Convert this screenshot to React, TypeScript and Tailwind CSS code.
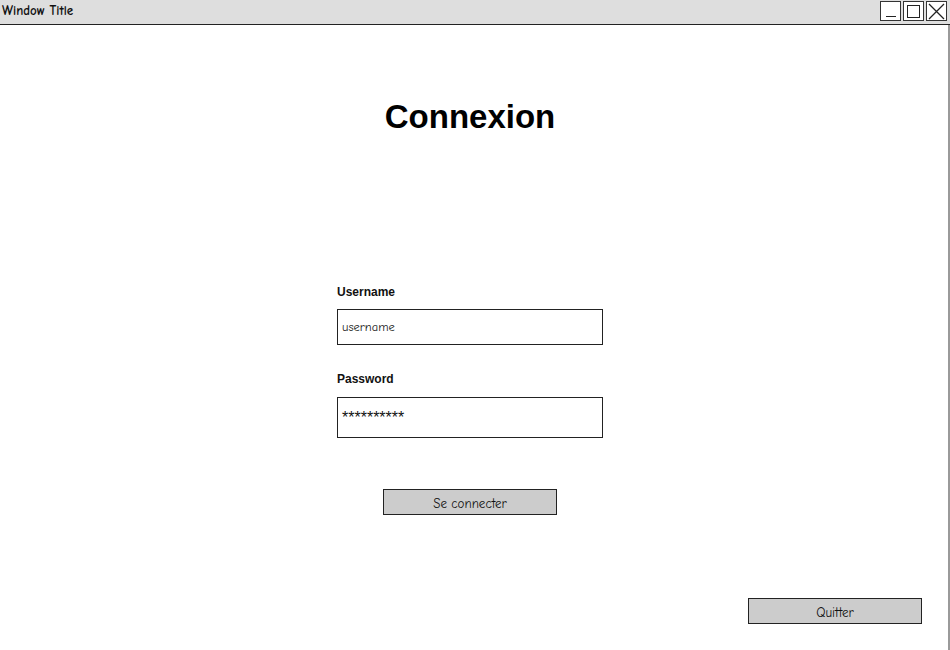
import React from "react";

const comic = { fontFamily: '"Comic Sans MS", "Comic Neue", "DejaVu Sans", sans-serif' };

export default function App() {
  return (
    <div className="w-[950px] h-[650px] bg-white flex flex-col overflow-hidden">
      <div className="h-[25px] bg-[#dedede] border-b-[1.5px] border-[#222] flex items-start justify-between shrink-0">
        <div
          className="pl-[2px] pt-[4px] text-[13px] leading-[14px] font-bold text-[#111]"
          style={comic}
        >
          Window Title
        </div>
        <div className="flex gap-[2px] pt-[1px] pr-[3px]">
          <div className="w-[21px] h-[20px] bg-white border border-[#333] flex items-end justify-center pb-[3px]">
            <div className="w-[10px] h-[1.5px] bg-[#222]" />
          </div>
          <div className="w-[21px] h-[20px] bg-white border border-[#333] flex items-center justify-center">
            <div className="w-[13px] h-[13px] border-[1.5px] border-[#222]" />
          </div>
          <div className="w-[21px] h-[20px] bg-white border border-[#333] flex items-center justify-center">
            <svg width="17" height="17" viewBox="0 0 17 17">
              <path d="M1 1 L16 16 M16 1 L1 16" stroke="#222" strokeWidth="1.3" fill="none" />
            </svg>
          </div>
        </div>
      </div>
      <div className="flex-1 flex">
        <div className="flex-1 flex flex-col" style={{ fontFamily: '"Liberation Sans", Arial, sans-serif' }}>
          <div className="pr-[8px] mt-[73px] text-center text-[33px] leading-[38px] font-bold text-black">
            Connexion
          </div>
          <div className="pr-[8px] flex justify-center mt-[148px]">
            <div className="w-[266px] flex flex-col">
              <div className="text-[12px] leading-[16px] font-bold text-[#111]">Username</div>
              <div className="mt-[9px] h-[36px] border border-[#222] flex items-center pl-[4px] pt-[1px] text-[12.5px] text-[#222]" style={comic}>
                username
              </div>
              <div className="mt-[26px] text-[12px] leading-[16px] font-bold text-[#111]">Password</div>
              <div className="mt-[10px] h-[41px] border border-[#222] flex items-start pt-[12px] pl-[4px] text-[16px] leading-[16px] text-[#111]">
                **********
              </div>
            </div>
          </div>
          <div className="pr-[8px] flex justify-center mt-[51px]">
            <div className="w-[174px] h-[26px] bg-[#cccccc] border border-[#222] flex items-center justify-center pt-[3px] text-[13px] text-[#111]" style={comic}>
              Se connecter
            </div>
          </div>
          <div className="flex justify-end pr-[26px] mt-[83px]">
            <div className="w-[174px] h-[26px] bg-[#cccccc] border border-[#222] flex items-center justify-center pt-[3px] text-[13px] text-[#111]" style={comic}>
              Quitter
            </div>
          </div>
        </div>
        <div className="w-[2px] bg-[#9a9a9a]" />
      </div>
    </div>
  );
}
